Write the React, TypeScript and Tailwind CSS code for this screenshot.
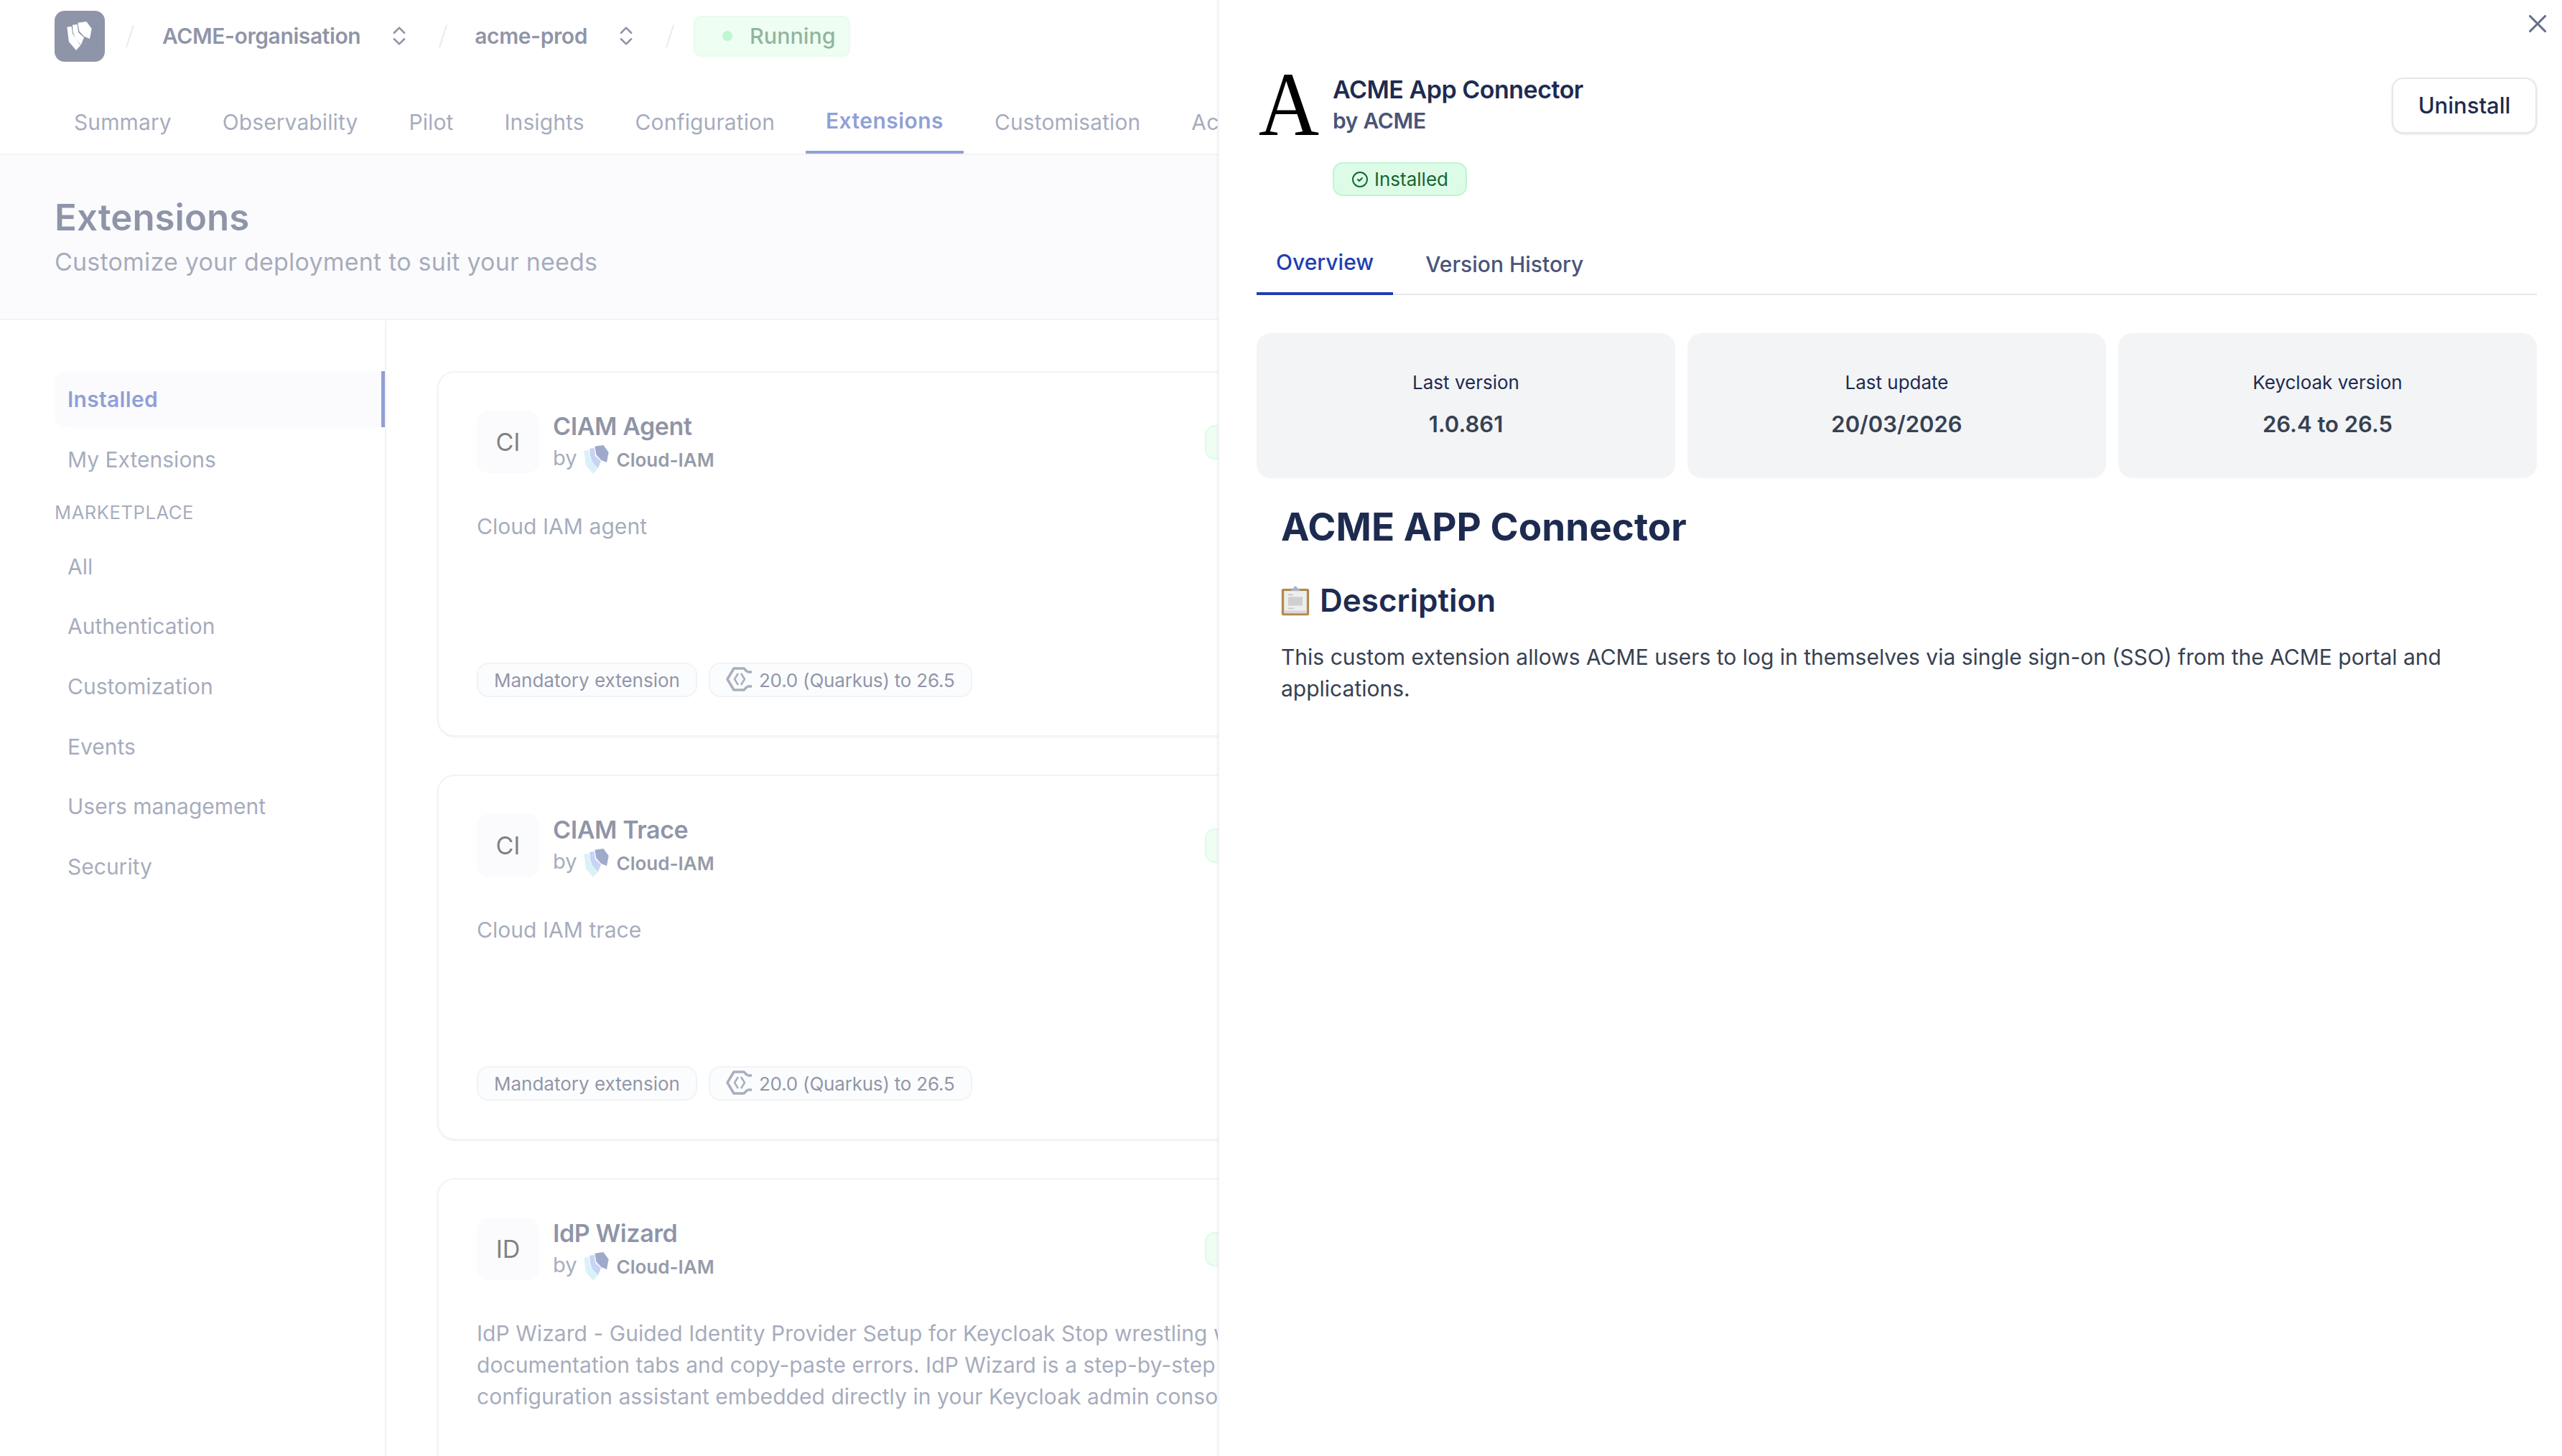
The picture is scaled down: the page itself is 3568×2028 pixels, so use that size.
import { ChevronsUpDown, CircleCheck, X } from "lucide-react";

const navy = "text-[#1e2b50]";

const tabs = ["Summary", "Observability", "Pilot", "Insights", "Configuration", "Extensions", "Customisation", "Access"];

const marketplace = ["All", "Authentication", "Customization", "Events", "Users management", "Security"];

const extensions = [
  {
    initials: "CI",
    name: "CIAM Agent",
    lines: ["Cloud IAM agent"],
    tags: true,
  },
  {
    initials: "CI",
    name: "CIAM Trace",
    lines: ["Cloud IAM trace"],
    tags: true,
  },
  {
    initials: "ID",
    name: "IdP Wizard",
    lines: [
      "IdP Wizard - Guided Identity Provider Setup for Keycloak Stop wrestling with",
      "documentation tabs and copy-paste errors. IdP Wizard is a step-by-step",
      "configuration assistant embedded directly in your Keycloak admin console",
    ],
    tags: false,
  },
];

const stats = [
  { label: "Last version", value: "1.0.861" },
  { label: "Last update", value: "20/03/2026" },
  { label: "Keycloak version", value: "26.4 to 26.5" },
];

// three facets of the shield mark
const CloudIamMark = ({ mono, className }: { mono?: boolean; className: string }) => (
  <svg viewBox="0 0 180 180" className={className}>
    <polygon points="37,53 56,50 60,80 93,130 75,150 45,115" fill={mono ? "#fff" : "#b5e3ee"} />
    <polygon points="60,44 80,42 84,75 108,97 95,128 72,100 62,75" fill={mono ? "#fff" : "#8fa8ea"} />
    <polygon points="82,35 118,30 140,60 132,102 108,92 88,70" fill={mono ? "#fff" : "#3f5596"} />
  </svg>
);

const KeycloakIcon = () => (
  <svg viewBox="0 0 60 56" className="-my-[4px] -mr-[4px] -ml-[10px] h-[56px] w-[60px] shrink-0" fill="none" stroke="#515d7f" strokeWidth="3.5" strokeLinejoin="round">
    <path d="M40 17 L35 12 H21 L12 27 L21 42 H35 L40 37" />
    <path d="M40 17 H46 M40 37 H46" />
    <path d="M27 19 L22 27 L27 35 M31 19 L36 27 L31 35" strokeWidth="2.5" />
  </svg>
);

const ClipboardEmoji = () => (
  <svg viewBox="8 4 48 58" className="h-[44px] w-[40px] shrink-0" preserveAspectRatio="none">
    <rect x="9" y="12" width="46" height="49" rx="3" fill="#b08a4e" />
    <rect x="13" y="16" width="38" height="41" fill="#eeeeee" />
    <rect x="13" y="52" width="38" height="5" fill="#d8d8d8" />
    <rect x="20" y="27" width="24" height="16" fill="#cfcfcf" />
    <rect x="20" y="22" width="8" height="2" fill="#bdbdbd" />
    <rect x="20" y="47" width="10" height="2" fill="#c8c8c8" />
    <path d="M24 16 L27 11 H29 C29 6 35 6 35 11 H37 L40 16 Z" fill="#a9b4c4" />
  </svg>
);

const ExtensionCard = ({ initials, name, lines, tags }: { initials: string; name: string; lines: string[]; tags: boolean }) => (
  <div className="flex h-[509px] w-[1311px] shrink-0 flex-col rounded-[24px] border-2 border-gray-200 bg-white p-[53px] shadow-sm">
    <div className="flex items-center justify-between">
      <div className="flex items-center gap-[19px]">
        <div className="flex size-[87px] items-center justify-center rounded-[16px] bg-[#f7f7fb] text-[34px] text-black">{initials}</div>
        <div>
          <p className={`text-[34px] leading-[41px] font-semibold tracking-[-0.4px] ${navy}`}>{name}</p>
          <div className="mt-[4px] flex h-[40px] items-center text-[29px] text-[#4d597b]">
            by
            <CloudIamMark className="-mt-[6px] -mb-[10px] -ml-[3px] size-[60px] shrink-0" />
            <span className="mt-[4px] -ml-[2px] text-[26px] font-semibold text-[#2b3650]">Cloud-IAM</span>
          </div>
        </div>
      </div>
      <span className="flex h-[48px] w-[187px] items-center justify-center rounded-[14px] border-2 border-[#bbf7d0] bg-[#dcfce7] text-[26px] text-[#166534]">
        Installed
      </span>
    </div>
    <p className="mt-[52px] whitespace-nowrap text-[30px] leading-[44px] tracking-[0.05px] text-[#4d597b]">
      {lines.map((line) => (
        <span key={line} className="block">
          {line}
        </span>
      ))}
    </p>
    {tags && (
      <div className="mt-auto flex gap-[16px] text-[26px] text-[#1e2b50]">
        <span className="flex h-[48px] items-center rounded-[16px] border-2 border-gray-200 bg-[#f7f8fa] px-[22px]">Mandatory extension</span>
        <span className="flex h-[48px] items-center rounded-[16px] border-2 border-gray-200 bg-[#f7f8fa] px-[22px] tracking-[-0.2px]">
          <KeycloakIcon />
          20.0 (Quarkus) to 26.5
        </span>
      </div>
    )}
  </div>
);

const Slash = ({ className }: { className: string }) => <span className={`h-[33px] w-[2px] rotate-[18deg] bg-gray-300 ${className}`} />;

export default function App() {
  return (
    <div className="relative h-[2028px] w-[3568px] overflow-hidden bg-white font-['Inter',sans-serif]">
      {/* page under the drawer */}
      <header className="h-[216px] border-b-2 border-gray-200 px-[76px]">
        <div className={`flex h-[100px] items-center text-[30px] font-semibold tracking-[-0.4px] ${navy}`}>
          <div className="flex h-[71px] w-[70px] items-center justify-center rounded-[14px] bg-[#1e2b50]">
            <CloudIamMark mono className="size-[60px]" />
          </div>
          <Slash className="mr-[44px] ml-[34px]" />
          <span>ACME-organisation</span>
          <ChevronsUpDown className="ml-[37px] size-[34px]" strokeWidth={1.8} />
          <Slash className="mx-[43px]" />
          <span>acme-prod</span>
          <ChevronsUpDown className="ml-[37px] size-[34px]" strokeWidth={1.8} />
          <Slash className="mr-[32px] ml-[43px]" />
          <span className="flex h-[57px] w-[218px] items-center rounded-[10px] border-2 border-[#d1f7dd] bg-[#dcfce7] pl-[38px] text-[30.5px] font-medium tracking-normal text-[#256b37]">
            <span className="mr-[24px] size-[14px] rounded-full bg-[#7ceea0]" />
            Running
          </span>
        </div>
        <nav className="mt-[26px] -ml-[1px] flex w-[1621px] gap-[15px] overflow-hidden text-[30px] tracking-[0.1px] text-[#4d597b]">
          {tabs.map((tab) =>
            tab === "Extensions" ? (
              <span key={tab} className="flex h-[88px] shrink-0 items-center border-b-4 border-[#1e40af] px-[28px] font-semibold tracking-[0.45px] text-[#1e40af]">
                {tab}
              </span>
            ) : (
              <span key={tab} className="flex h-[88px] shrink-0 items-center px-[28px]">
                {tab}
              </span>
            ),
          )}
        </nav>
      </header>

      <section className="h-[230px] border-b-2 border-gray-200 bg-[#f7f7fb] px-[76px] pt-[57px]">
        <h1 className={`text-[51px] leading-[60px] font-semibold ${navy}`}>Extensions</h1>
        <p className="mt-[10px] text-[34px] leading-[44px] tracking-[0.2px] text-[#4d597b]">Customize your deployment to suit your needs</p>
      </section>

      <div className="flex">
        <aside className="h-[1582px] w-[538px] shrink-0 border-r-2 border-gray-200 pt-[71px] pl-[76px] text-[30px] text-[#4d597b]">
          <div className="flex h-[78px] items-center rounded-l-[16px] border-r-[5px] border-[#1e40af] bg-[#f7f7fb] pl-[18px] font-semibold tracking-[0.3px] text-[#1e40af]">
            Installed
          </div>
          <div className="mt-[6px] flex h-[78px] items-center pl-[18px]">My Extensions</div>
          <div className="flex h-[71px] items-center text-[25.5px] tracking-[0.6px]">MARKETPLACE</div>
          <ul className="flex flex-col gap-[5.7px]">
            {marketplace.map((item) => (
              <li key={item} className="flex h-[78px] items-center pl-[18px]">
                {item}
              </li>
            ))}
          </ul>
        </aside>
        <main className="flex flex-col gap-[53px] pt-[71px] pl-[71px]">
          {extensions.map((ext) => (
            <ExtensionCard key={ext.name} {...ext} />
          ))}
        </main>
      </div>

      <div className="absolute inset-0 bg-white/50" />

      {/* right drawer */}
      <aside className="absolute inset-y-0 right-0 w-[1872px] border-l-2 border-gray-100 bg-white pt-[105px] pr-[35px] pl-[52px] shadow-sm">
        <X className="absolute top-[12px] right-[13px] size-[42px] text-[#64708a]" strokeWidth={1.8} />
        <div className="flex items-start justify-between">
          <div className="flex">
            <div className="mt-[-23px] flex w-[106px] justify-center pr-[16px] font-['Liberation_Serif',serif] text-[127px] leading-[127px] text-black">
              <span className="scale-x-[0.92]">A</span>
            </div>
            <div>
              <p className={`text-[34px] leading-[40px] font-semibold tracking-[-0.5px] ${navy}`}>ACME App Connector</p>
              <p className="mt-[3px] text-[30px] leading-[40px] font-semibold tracking-[-0.3px] text-[#4a5578]">by ACME</p>
              <span className="mt-[38px] flex h-[47px] w-[187px] items-center justify-center gap-[8px] rounded-[14px] border-2 border-[#bbf7d0] bg-[#dcfce7] text-[26px] text-[#166534]">
                <CircleCheck className="size-[24px]" strokeWidth={2} />
                Installed
              </span>
            </div>
          </div>
          <button className={`mt-[3px] h-[78px] w-[202px] rounded-[16px] border-2 border-gray-200 bg-white text-[31px] font-medium shadow-sm ${navy}`}>
            Uninstall
          </button>
        </div>

        <div className="mt-[50px] flex border-b-2 border-gray-200 text-[30px]">
          <span className="mb-[-2px] flex h-[88px] items-center border-b-4 border-[#1e40af] px-[27px] font-medium text-[#1e40af]">Overview</span>
          <span className="ml-[18px] flex h-[86px] items-center px-[27px] pt-[4px] font-medium text-[#4a5578]">Version History</span>
        </div>

        <div className="mt-[53px] grid grid-cols-3 gap-[17px]">
          {stats.map((stat) => (
            <div key={stat.label} className="flex h-[202px] flex-col items-center justify-center rounded-[20px] bg-[#f3f4f6] pb-[4px]">
              <p className={`text-[26px] leading-[36px] ${navy}`}>{stat.label}</p>
              <p className="mt-[20px] text-[31px] leading-[40px] font-semibold text-[#374151]">{stat.value}</p>
            </div>
          ))}
        </div>

        <div className="px-[34px]">
          <h2 className={`mt-[34px] text-[53px] leading-[68px] font-bold ${navy}`}>ACME APP Connector</h2>
          <h3 className={`mt-[41px] flex items-center gap-[14px] text-[44px] leading-[54px] font-semibold ${navy}`}>
            <ClipboardEmoji />
            Description
          </h3>
          <p className="mt-[30px] text-[30px] leading-[44px] text-[#374151]">
            This custom extension allows ACME users to log in themselves via single sign-on (SSO) from the ACME portal and applications.
          </p>
        </div>
      </aside>
    </div>
  );
}
